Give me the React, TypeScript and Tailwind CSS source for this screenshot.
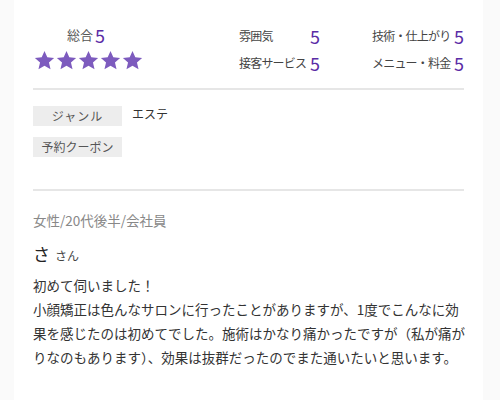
import React from "react";

const Star = () => (
  <svg width="21" height="21" viewBox="0 0 24 24" className="shrink-0">
    <path
      d="M12 1.2l3.2 7.2 7.8.7-5.9 5.1 1.8 7.7L12 17.9l-6.9 4 1.8-7.7L1 9.1l7.8-.7z"
      fill="#7d5bbe"
    />
  </svg>
);

const Score = ({ label, w }: { label: string; w: string }) => (
  <div className={`flex items-center justify-between h-[18px] ${w}`}>
    <span className="text-[12px] tracking-[-0.8px] text-[#444] whitespace-nowrap">{label}</span>
    <span className="text-[18px] leading-none text-[#5a2ca6]">5</span>
  </div>
);

export default function App() {
  return (
    <div
      className="w-[500px] h-[400px] bg-[#fafafa] flex overflow-hidden"
      style={{ fontFamily: '"Noto Sans CJK JP", "Noto Sans", sans-serif' }}
    >
      <div className="ml-[14px] w-[469px] bg-white h-full px-[19px]">
        <div className="flex pt-[24px] h-[90px] border-b-2 border-[#e6e6e6]">
          <div className="w-[207px] flex flex-col">
            <div className="flex items-center justify-center w-[106px] gap-[2px] h-[22px]">
              <span className="text-[13px] text-[#555]">総合</span>
              <span className="text-[18px] leading-none text-[#5a2ca6]">5</span>
            </div>
            <div className="flex gap-[1px] mt-[4px] ml-[1px]">
              <Star />
              <Star />
              <Star />
              <Star />
              <Star />
            </div>
          </div>
          <div className="grid grid-cols-[133px_92px] gap-y-[9px] content-start mt-[3px]">
            <Score label="雰囲気" w="w-[81px]" />
            <Score label="技術・仕上がり" w="w-[92px]" />
            <Score label="接客サービス" w="w-[81px]" />
            <Score label="メニュー・料金" w="w-[92px]" />
          </div>
        </div>
        <div className="pt-[16px] h-[101px] border-b-2 border-[#e6e6e6] flex flex-col gap-[11px]">
          <div className="flex items-center gap-[10px]">
            <div className="w-[89px] h-[20px] bg-[#ededed] flex items-center justify-center text-[12px] tracking-[1px] text-[#555]">
              ジャンル
            </div>
            <span className="text-[12px] text-[#333] -mt-[4px]">エステ</span>
          </div>
          <div className="w-[89px] h-[20px] bg-[#ededed] flex items-center justify-center text-[12px] text-[#555]">
            予約クーポン
          </div>
        </div>
        <div className="pt-[18px]">
          <div className="text-[13.5px] text-[#888] leading-[22px]">女性/20代後半/会社員</div>
          <div className="flex items-baseline gap-[5px] mt-[11px]">
            <span className="text-[17px] leading-[24px] text-[#222]">さ</span>
            <span className="text-[12px] text-[#444]">さん</span>
          </div>
          <p className="mt-[7px] text-[13.5px] leading-[24px] text-[#333] w-[434px]">
            初めて伺いました！
            <br />
            小顔矯正は色んなサロンに行ったことがありますが、1度でこんなに効果を感じたのは初めてでした。施術はかなり痛かったですが（私が痛がりなのもあります）、効果は抜群だったのでまた通いたいと思います。
          </p>
        </div>
      </div>
    </div>
  );
}
